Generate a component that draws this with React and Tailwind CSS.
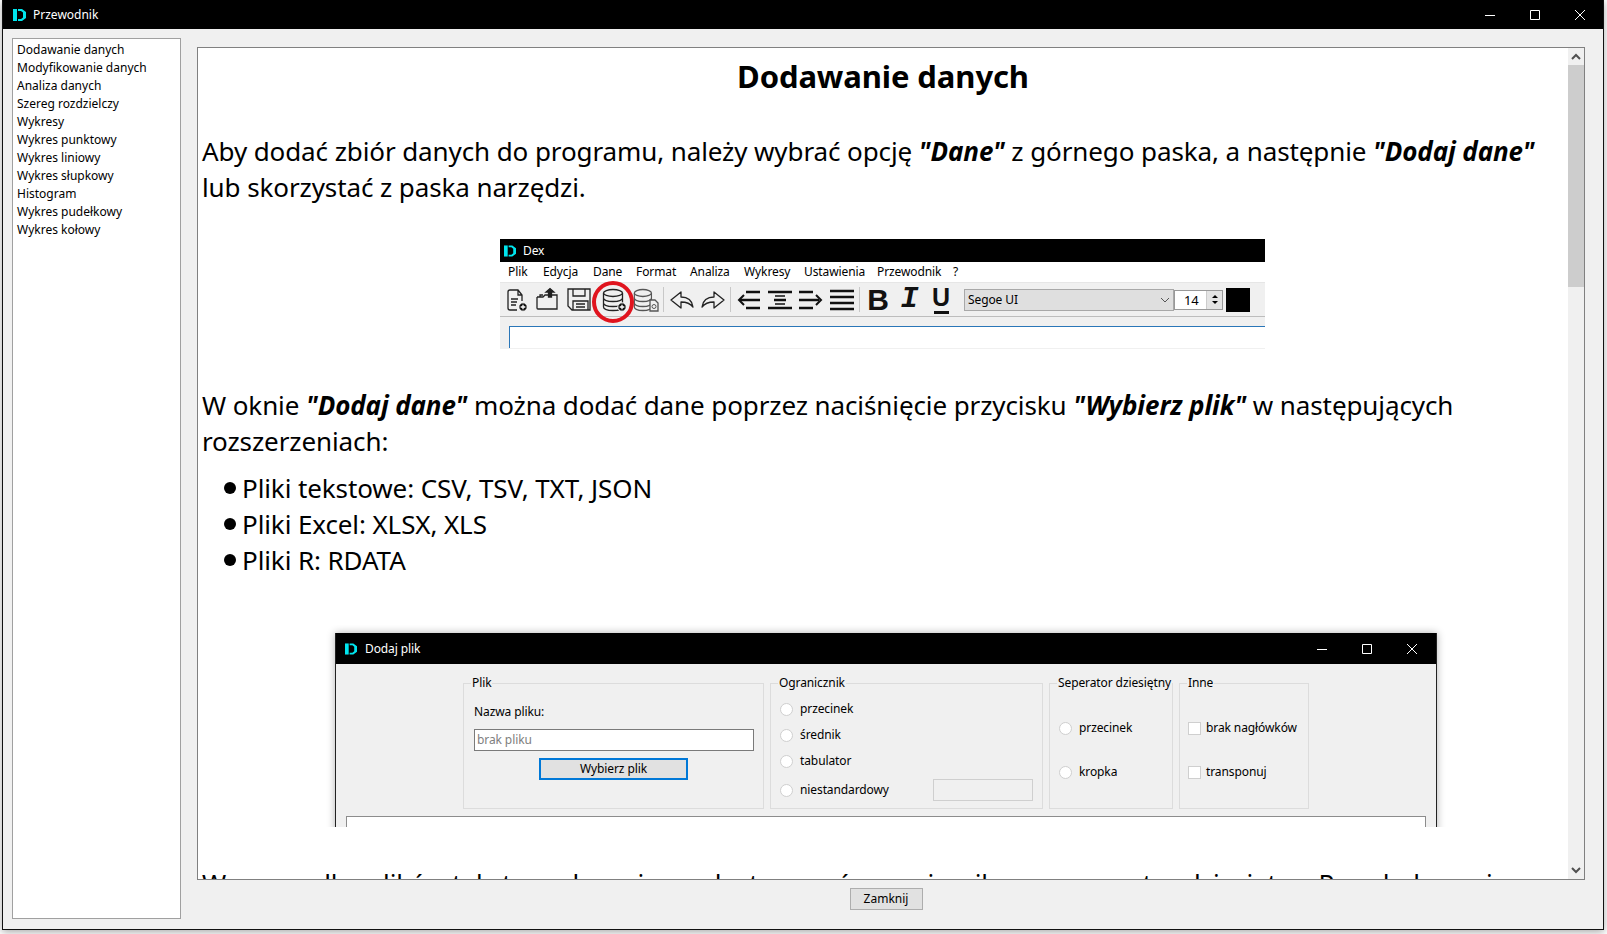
const Logo = ({ className }) => (
  <svg viewBox="0 0 13 12" className={className}>
    <path d="M0 0h4v12H0z" fill="#00e5ee" />
    <path d="M5 0h4l4 3v6l-4 3H5v-2h3l2-1.5v-5L8 2H5z" fill="#00e5ee" />
  </svg>
);

const WinControls = ({ box, gap }) => (
  <div className={`flex items-center ${gap}`}>
    <svg width={box} height={box} viewBox="0 0 12 12" stroke="#fff" fill="none"><path d="M1 6.5h10" /></svg>
    <svg width={box} height={box} viewBox="0 0 12 12" stroke="#fff" fill="none"><path d="M1.5 1.5h9v9h-9z" /></svg>
    <svg width={box} height={box} viewBox="0 0 12 12" stroke="#fff" fill="none"><path d="M1 1l10 10M11 1L1 11" /></svg>
  </div>
);

const Plus = ({ cx, cy }) => (
  <g>
    <circle cx={cx} cy={cy} r="4.2" fill="#111" stroke="#fff" strokeWidth="1" />
    <path d={`M${cx - 2.3} ${cy}h4.6M${cx} ${cy - 2.3}v4.6`} stroke="#fff" strokeWidth="1.3" />
  </g>
);

const Ic = ({ children, w = 31 }) => (
  <div className="flex items-center justify-center shrink-0" style={{ width: w }}>
    <svg width="26" height="26" viewBox="0 0 26 26" fill="none" stroke="#222" strokeWidth="1.3">{children}</svg>
  </div>
);

const Sep = () => <div className="w-px h-[25px] bg-[#c8c8c8] mx-[2px] shrink-0" />;

const Db = ({ x = 0, s = 1 }) => (
  <g transform={`translate(${x} 0) scale(${s} 1)`}>
    <ellipse cx="11" cy="6" rx="9.5" ry="3.5" />
    <path d="M1.5 6v14c0 2 4 3.5 9.5 3.5S20.500 22 20.500 20V6M1.500 11c0 2 4 3.500 9.500 3.500s9.500-1.500 9.500-3.500M1.500 16c0 2 4 3.500 9.500 3.500s9.500-1.500 9.500-3.500" />
  </g>
);

const Toolbar = () => (
  <div className="flex items-center h-[33px] pl-[1px] bg-[#f0f0f0]">
    <Ic>
      <path d="M6 3h8l4 5v6M6 3c-1 0-2 1-2 2v16c0 1 1 2 2 2h7M14 3v5h4M7 12h7M7 15h6M7 18h5" />
      <Plus cx="19" cy="20" />
    </Ic>
    <Ic>
      <path d="M2 10h6l2-2h3M17 8h5v14H3c-.8 0-1-.5-1-1V10M5 10V8h3" />
      <path d="M13.500 10V5h-2.500l4-3.500 4 3.500h-2.500v5z" fill="#222" />
    </Ic>
    <Ic>
      <path d="M2 2h22v21H6l-4-4zM7 2v7h12V2M7 23v-9h15v9" />
      <path d="M10 17h9M10 20h9" />
    </Ic>
    <div className="w-[5px] shrink-0" />
    <Ic>
      <Db />
      <Plus cx="20" cy="20" />
    </Ic>
    <Ic>
      <g stroke="#555"><Db s={0.9} /></g>
      <path d="M17 13h5l3 3v8h-8z" fill="#f0f0f0" stroke="#555" />
      <circle cx="21" cy="19.500" r="2" stroke="#555" strokeWidth="1" />
    </Ic>
    <Sep />
    <Ic>
      <path d="M2 13l10-8v5c6 0 11 3 12 10-3-4-7-5-12-5v6z" strokeLinejoin="round" />
    </Ic>
    <Ic>
      <path d="M24 13L14 5v5C8 10 3 13 2 20c3-4 7-5 12-5v6z" strokeLinejoin="round" />
    </Ic>
    <Sep />
    <Ic>
      <g strokeWidth="2.400" stroke="#111">
        <path d="M10 5h14M4 13h20M10 21h14" />
        <path d="M8 8l-5 5 5 5" strokeWidth="2" />
      </g>
    </Ic>
    <Ic>
      <g strokeWidth="2.400" stroke="#111"><path d="M1 5h24M7 13h12M1 21h24" /><path d="M8 9h10M8 17h10" strokeWidth="1.500" /></g>
    </Ic>
    <Ic>
      <g strokeWidth="2.400" stroke="#111">
        <path d="M1 5h14M1 13h20M1 21h14" />
        <path d="M18 8l5 5-5 5" strokeWidth="2" />
      </g>
    </Ic>
    <Ic>
      <g strokeWidth="2.400" stroke="#111"><path d="M1 4h24M1 10h24M1 16h24M1 22h24" /></g>
    </Ic>
    <Sep />
    <div className="w-[32px] text-center text-[30px] leading-[33px] font-bold text-[#111] shrink-0 font-['Liberation_Sans',sans-serif]">B</div>
    <div className="w-[31px] text-center text-[30px] leading-[33px] font-bold italic text-[#111] shrink-0 font-['Liberation_Mono',monospace]">I</div>
    <div className="w-[32px] flex flex-col items-center shrink-0 text-[#111]">
      <span className="text-[25px] leading-[25px] font-bold font-['Liberation_Sans',sans-serif]">U</span>
      <span className="w-[15px] h-[3px] bg-[#111] mt-[1px]" />
    </div>
    <div className="ml-[7px] w-[210px] h-[22px] bg-[#dfdfdf] border border-[#a8a8a8] flex items-center justify-between pl-[3px] pr-[3px] text-[12px]">
      <span>Segoe UI</span>
      <svg width="10" height="6" viewBox="0 0 10 6" fill="none" stroke="#555"><path d="M1 1l4 4 4-4" /></svg>
    </div>
    <div className="w-[49px] h-[20px] bg-white border border-[#999] flex items-center justify-between pl-[9px] text-[13px]">
      <span>14</span>
      <div className="w-[16px] h-full bg-[#e4e4e4] flex flex-col items-center justify-center gap-[3px] border-l border-[#ccc]">
        <span className="w-0 h-0 border-x-[3px] border-x-transparent border-b-[3px] border-b-black" />
        <span className="w-0 h-0 border-x-[3px] border-x-transparent border-t-[3px] border-t-black" />
      </div>
    </div>
    <div className="ml-[3px] w-[24px] h-[24px] bg-black" />
  </div>
);

const menu = [["Plik", 35], ["Edycja", 50], ["Dane", 43], ["Format", 54], ["Analiza", 54], ["Wykresy", 60], ["Ustawienia", 73], ["Przewodnik", 76], ["?", 10]];

const DexShot = () => (
  <div className="relative w-[765px] h-[110px] mx-auto mr-[303px] shrink-0 bg-[#f0f0f0]">
    <div className="h-[23px] bg-black flex items-center pl-[4px] gap-[7px] text-white text-[12px]">
      <Logo className="w-[12px] h-[12px]" />
      <span>Dex</span>
    </div>
    <div className="h-[21px] bg-white flex items-center pl-[8px] text-[12px] text-black border-b border-[#e6e6e6]">
      {menu.map(([m, w]) => (
        <span key={m} className="shrink-0" style={{ width: w }}>{m}</span>
      ))}
    </div>
    <Toolbar />
    <div className="border-t border-[#bdbdbd] h-[32px] pt-[9px] pl-[9px]">
      <div className="h-full bg-white border-t border-l border-[#2a76b8]" />
    </div>
    <div className="absolute left-[92px] top-[42px] w-[42px] h-[42px] rounded-full border-[4px] border-[#e0141e]" />
  </div>
);

const Group = ({ title, className, children }) => (
  <fieldset className={`border border-[#dcdcdc] h-[134px] shrink-0 ${className}`}>
    <legend className="ml-[7px] px-[1px] text-[12px] leading-[16px]">{title}</legend>
    {children}
  </fieldset>
);

const Radio = ({ label, className = "" }) => (
  <div className={`flex items-center gap-[7px] text-[12px] leading-[16px] ${className}`}>
    <span className="w-[13px] h-[13px] rounded-full bg-white border border-[#cfcfcf]" />
    <span>{label}</span>
  </div>
);

const Check = ({ label }) => (
  <div className="flex items-center gap-[5px] text-[12px] leading-[16px]">
    <span className="w-[13px] h-[13px] bg-white border border-[#cfcfcf]" />
    <span>{label}</span>
  </div>
);

const DialogShot = () => (
  <div className="h-[202px] w-[1122px] ml-[123px] overflow-hidden pt-[8px] px-[10px] shrink-0">
    <div className="w-[1102px] h-[220px] bg-[#f0f0f0] border-x border-[#222] shadow-[0_0_8px_rgba(0,0,0,0.3)]">
      <div className="h-[31px] bg-black flex items-center pl-[9px] pr-[18px] text-white text-[12px]">
        <Logo className="w-[12px] h-[12px] mr-[8px]" />
        <span className="flex-1">Dodaj plik</span>
        <WinControls box={12} gap="gap-[33px]" />
      </div>
      <div className="flex pl-[127px] pt-[11px] gap-[6px] text-black">
        <Group title="Plik" className="w-[301px]">
          <div className="pl-[10px] pr-[9px] pt-[12px]">
            <div className="text-[12px] leading-[18px]">Nazwa pliku:</div>
            <div className="mt-[8px] h-[22px] bg-white border border-[#7a7a7a] text-[12px] leading-[20px] pl-[2px] text-[#808080]">brak pliku</div>
            <div className="mt-[7px] mx-auto ml-[65px] w-[149px] h-[22px] bg-[#e1e1e1] border-2 border-[#0078d7] text-[12px] leading-[18px] text-center">Wybierz plik</div>
          </div>
        </Group>
        <Group title="Ogranicznik" className="w-[273px]">
          <div className="pl-[9px] pt-[10px] flex flex-col gap-[10px] relative">
            <Radio label="przecinek" />
            <Radio label="średnik" />
            <Radio label="tabulator" />
            <div className="flex items-center justify-between pr-[9px]">
              <Radio label="niestandardowy" />
              <span className="w-[100px] h-[22px] bg-[#f0f0f0] border border-[#cfcfcf]" />
            </div>
          </div>
        </Group>
        <Group title="Seperator dziesiętny" className="w-[124px]">
          <div className="pl-[9px] pt-[29px] flex flex-col gap-[28px]">
            <Radio label="przecinek" />
            <Radio label="kropka" />
          </div>
        </Group>
        <Group title="Inne" className="w-[130px]">
          <div className="pl-[8px] pt-[29px] flex flex-col gap-[28px]">
            <Check label="brak nagłówków" />
            <Check label="transponuj" />
          </div>
        </Group>
      </div>
      <div className="mx-[10px] mt-[7px] h-[40px] bg-white border border-[#8c8c8c]" />
    </div>
  </div>
);

const side = ["Dodawanie danych", "Modyfikowanie danych", "Analiza danych", "Szereg rozdzielczy", "Wykresy", "Wykres punktowy", "Wykres liniowy", "Wykres słupkowy", "Histogram", "Wykres pudełkowy", "Wykres kołowy"];

const Q = ({ children }) => <b className="font-bold italic">"{children}"</b>;

export default function App() {
  return (
    <div className="w-[1607px] h-[934px] bg-white overflow-hidden pl-[2px] font-['Noto_Sans',sans-serif] text-black">
      <div className="w-[1602px] h-[930px] flex flex-col bg-[#f0f0f0] border-x border-b border-[#111] shadow-[0_2px_8px_rgba(0,0,0,0.35)]">
        <div className="h-[29px] bg-black text-white flex items-center pl-[10px] pr-[17px] text-[12px] shrink-0">
          <Logo className="w-[13px] h-[12px] mr-[7px]" />
          <span className="flex-1">Przewodnik</span>
          <WinControls box={12} gap="gap-[33px]" />
        </div>
        <div className="flex-1 flex pl-[9px] pr-[18px] gap-[16px] min-h-0">
          <div className="mt-[9px] mb-[10px] w-[169px] bg-white border border-[#a0a0a0] pl-[4px] pt-[2px] text-[12px] leading-[18px] shrink-0">
            {side.map((s) => (
              <div key={s} className="whitespace-nowrap">{s}</div>
            ))}
          </div>
          <div className="flex-1 flex flex-col items-center min-w-0 pt-[18px]">
            <div className="w-full h-[833px] bg-white border border-[#808080] flex overflow-hidden shrink-0">
              <div className="flex-1 pl-[4px] pt-[10px] overflow-hidden text-[26px] leading-[36px] tracking-[-0.1px]">
                <h1 className="text-[31px] leading-[36px] font-bold text-center pr-[4px] mb-[39px]">Dodawanie danych</h1>
                <p className="mb-[34px]">
                  Aby dodać zbiór danych do programu, należy wybrać opcję <Q>Dane</Q> z górnego paska, a następnie <Q>Dodaj dane</Q> lub skorzystać z paska narzędzi.
                </p>
                <DexShot />
                <p className="mt-[38px] mb-[11px]">
                  W oknie <Q>Dodaj dane</Q> można dodać dane poprzez naciśnięcie przycisku <Q>Wybierz plik</Q> w następujących rozszerzeniach:
                </p>
                <ul className="pl-[22px] mb-[47px]">
                  {["Pliki tekstowe: CSV, TSV, TXT, JSON", "Pliki Excel: XLSX, XLS", "Pliki R: RDATA"].map((t) => (
                    <li key={t} className="flex items-center gap-[6px]">
                      <span className="w-[12px] h-[12px] rounded-full bg-black shrink-0" />
                      <span>{t}</span>
                    </li>
                  ))}
                </ul>
                <DialogShot />
                <p className="mt-[38px]">W przypadku plików tekstowych możemy dostosować ogranicznik oraz separator dziesiętny. Po załadowaniu</p>
              </div>
              <div className="w-[16px] bg-[#f0f0f0] flex flex-col items-center shrink-0">
                <svg width="16" height="17" viewBox="0 0 16 17" fill="none" stroke="#505050" strokeWidth="2"><path d="M4 11l4-4 4 4" /></svg>
                <div className="w-full h-[222px] bg-[#cdcdcd]" />
                <div className="flex-1" />
                <svg width="16" height="17" viewBox="0 0 16 17" fill="none" stroke="#505050" strokeWidth="2"><path d="M4 6l4 4 4-4" /></svg>
              </div>
            </div>
            <div className="mt-[8px] w-[73px] h-[22px] bg-[#e1e1e1] border border-[#adadad] text-[12px] leading-[20px] text-center -ml-[10px]">Zamknij</div>
          </div>
        </div>
      </div>
    </div>
  );
}
